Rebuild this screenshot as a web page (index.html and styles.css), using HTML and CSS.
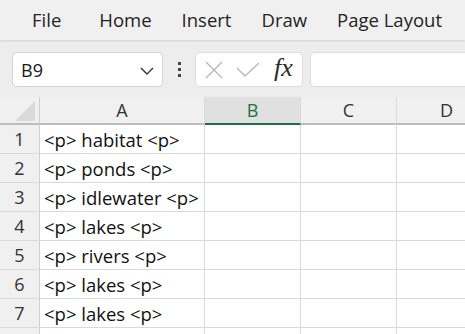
FILE: index.html
```html
<!DOCTYPE html>
<html>
<head>
<meta charset="utf-8">
<link rel="stylesheet" href="styles.css">
</head>
<body>
<div class="app">
  <nav class="menu">
    <span class="tab first">File</span>
    <span class="tab">Home</span>
    <span class="tab">Insert</span>
    <span class="tab">Draw</span>
    <span class="tab">Page Layout</span>
  </nav>
  <div class="fbar">
    <div class="namebox">
      <span class="ref">B9</span>
      <svg class="chev" width="14" height="8" viewBox="0 0 14 8"><path d="M1 1 L7 7 L13 1" fill="none" stroke="#333" stroke-width="1.4"/></svg>
    </div>
    <div class="dots"><i></i><i></i><i></i></div>
    <div class="fxbox">
      <svg class="ico" width="18" height="18" viewBox="0 0 18 18"><path d="M1 1 L17 17 M17 1 L1 17" fill="none" stroke="#b8b8b8" stroke-width="1.3"/></svg>
      <svg class="ico" width="24" height="16" viewBox="0 0 24 16"><path d="M1 6 L9 14 L23 1" fill="none" stroke="#b8b8b8" stroke-width="1.3"/></svg>
      <span class="fx">fx</span>
    </div>
    <div class="input"></div>
  </div>
  <div class="sheet">
    <div class="corner"><span class="tri"></span></div>
    <div class="ch">A</div>
    <div class="ch sel">B</div>
    <div class="ch">C</div>
    <div class="ch">D</div>

    <div class="rh">1</div><div class="cell">&lt;p&gt; habitat &lt;p&gt;</div><div class="cell"></div><div class="cell"></div><div class="cell"></div>
    <div class="rh">2</div><div class="cell">&lt;p&gt; ponds &lt;p&gt;</div><div class="cell"></div><div class="cell"></div><div class="cell"></div>
    <div class="rh">3</div><div class="cell">&lt;p&gt; idlewater &lt;p&gt;</div><div class="cell"></div><div class="cell"></div><div class="cell"></div>
    <div class="rh">4</div><div class="cell">&lt;p&gt; lakes &lt;p&gt;</div><div class="cell"></div><div class="cell"></div><div class="cell"></div>
    <div class="rh">5</div><div class="cell">&lt;p&gt; rivers &lt;p&gt;</div><div class="cell"></div><div class="cell"></div><div class="cell"></div>
    <div class="rh">6</div><div class="cell">&lt;p&gt; lakes &lt;p&gt;</div><div class="cell"></div><div class="cell"></div><div class="cell"></div>
    <div class="rh">7</div><div class="cell">&lt;p&gt; lakes &lt;p&gt;</div><div class="cell"></div><div class="cell"></div><div class="cell"></div>
    <div class="rh"></div><div class="cell"></div><div class="cell"></div><div class="cell"></div><div class="cell"></div>
  </div>
</div>
</body>
</html>
```
FILE: styles.css
```css
html, body {
  margin: 0;
  padding: 0;
  background: #f0f0f0;
  overflow: hidden;
}
.app {
  width: 465px;
  height: 334px;
  overflow: hidden;
  font-family: "Open Sans", "Noto Sans", sans-serif;
  color: #1f1f1f;
}
.menu {
  height: 40px;
  display: flex;
  align-items: center;
  gap: 30px;
  padding-left: 32px;
  background: #f0f0f0;
  box-shadow: 0 1px 2px rgba(0,0,0,0.12);
  position: relative;
  z-index: 1;
  font-size: 18.5px;
  white-space: nowrap;
}
.tab { line-height: 40px; color: #242424; }
.tab.first { margin-right: 8px; }
.fbar {
  height: 57px;
  box-sizing: border-box;
  padding: 12px 0 10px 12px;
  display: flex;
  align-items: stretch;
  background: #ededed;
}
.namebox {
  width: 151px;
  box-sizing: border-box;
  background: #fff;
  border: 1px solid #d4d4d4;
  border-radius: 5px;
  display: flex;
  align-items: center;
  justify-content: space-between;
  padding: 0 8px 0 8px;
}
.ref { font-size: 18px; color: #1a1a1a; }
.chev { margin-top: 2px; }
.dots {
  width: 32px;
  display: flex;
  flex-direction: column;
  align-items: center;
  justify-content: center;
  gap: 3px;
}
.dots i {
  display: block;
  width: 3px;
  height: 3px;
  background: #444;
}
.fxbox {
  width: 108px;
  box-sizing: border-box;
  background: #fff;
  border: 1px solid #dcdcdc;
  border-radius: 5px;
  display: flex;
  align-items: center;
  gap: 13px;
  padding-left: 9px;
}
.fx {
  font-family: "Liberation Serif", "DejaVu Serif", serif;
  font-style: italic;
  font-size: 26px;
  color: #2a2a2a;
  margin-left: 1px;
  margin-top: -3px;
}
.input {
  flex: 1;
  margin-left: 7px;
  background: #fff;
  border: 1px solid #dcdcdc;
  border-right: none;
  border-radius: 5px 0 0 5px;
}
.sheet {
  display: grid;
  grid-template-columns: 40px 165px 96px 96px 100px;
  grid-template-rows: 28px repeat(8, 29px);
  background: #fff;
}
.corner {
  background: #f0f0f0;
  border-right: 1px solid #cfcfcf;
  border-bottom: 2px solid #bdbdbd;
  box-sizing: border-box;
  position: relative;
}
.tri {
  position: absolute;
  right: 4px;
  bottom: 2px;
  width: 0;
  height: 0;
  border-left: 20px solid transparent;
  border-bottom: 20px solid #dadada;
}
.ch {
  background: #f0f0f0;
  border-right: 1px solid #dadada;
  border-bottom: 2px solid #bdbdbd;
  box-sizing: border-box;
  display: flex;
  align-items: center;
  justify-content: center;
  font-size: 18px;
  color: #333;
}
.ch.sel {
  background: #e0e0e0;
  color: #1e7145;
  border-bottom: 2px solid #1e7145;
}
.rh {
  background: #f0f0f0;
  border-right: 1px solid #cfcfcf;
  border-bottom: 1px solid #dadada;
  box-sizing: border-box;
  display: flex;
  align-items: center;
  justify-content: center;
  font-size: 18px;
  color: #333;
}
.cell {
  border-right: 1px solid #dadada;
  border-bottom: 1px solid #dadada;
  box-sizing: border-box;
  display: flex;
  align-items: center;
  padding-left: 4px;
  font-size: 18.5px;
  color: #111;
  white-space: nowrap;
}
```
